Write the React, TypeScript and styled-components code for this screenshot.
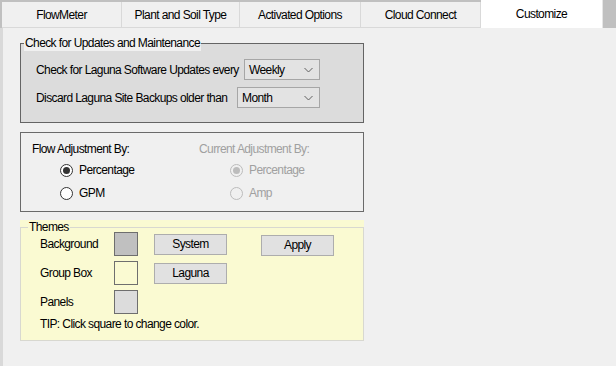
import { FC } from 'react'
import styled, { createGlobalStyle } from 'styled-components'

const GlobalStyle = createGlobalStyle`
  html, body {
    margin: 0;
    padding: 0;
    background: #f0f0f0;
  }
  body {
    font-family: "Liberation Sans", Arial, sans-serif;
    font-size: 12px;
    letter-spacing: -0.6px;
    color: #000;
  }
`

const tabs = [
  { label: 'FlowMeter', width: 120 },
  { label: 'Plant and Soil Type', width: 118 },
  { label: 'Activated Options', width: 121 },
  { label: 'Cloud Connect', width: 120 },
  { label: 'Customize', width: 122, active: true },
]

const Chevron: FC = () => (
  <svg width="9" height="6" viewBox="0 0 9 6">
    <polyline points="0.5,1 4.5,5 8.5,1" fill="none" stroke="#606060" strokeWidth="1" />
  </svg>
)

type ComboProps = { value: string, width: number }

const Combo: FC<ComboProps> = ({ value, width }) => (
  <ComboBox $width={width}>
    <span>{value}</span>
    <Chevron />
  </ComboBox>
)

type RadioProps = { label: string, checked?: boolean, disabled?: boolean }

const Radio: FC<RadioProps> = ({ label, checked, disabled }) => (
  <RadioRow $disabled={disabled}>
    <RadioCircle $disabled={disabled}>{checked && <RadioDot $disabled={disabled} />}</RadioCircle>
    {label}
  </RadioRow>
)

const App: FC = () => {
  return (
    <Page>
      <GlobalStyle />
      <TabStrip>
        {tabs.map((t) => (
          <Tab key={t.label} $width={t.width} $active={!!t.active}>
            {t.label}
          </Tab>
        ))}
      </TabStrip>
      <Pane>
        <UpdatesBox>
          <UpdatesLegend>Check for Updates and Maintenance</UpdatesLegend>
          <UpdateRows>
            <UpdateRow>
              <RowLabel $width={208}>Check for Laguna Software Updates every</RowLabel>
              <Combo value="Weekly" width={76} />
            </UpdateRow>
            <UpdateRow>
              <RowLabel $width={201}>Discard Laguna Site Backups older than</RowLabel>
              <Combo value="Month" width={83} />
            </UpdateRow>
          </UpdateRows>
        </UpdatesBox>

        <FlowPanel>
          <FlowColumn>
            <ColumnHeader>Flow Adjustment By:</ColumnHeader>
            <RadioList $indent={28}>
              <Radio label="Percentage" checked />
              <Radio label="GPM" />
            </RadioList>
          </FlowColumn>
          <FlowColumn>
            <ColumnHeader $disabled>Current Adjustment By:</ColumnHeader>
            <RadioList $indent={31}>
              <Radio label="Percentage" checked disabled />
              <Radio label="Amp" disabled />
            </RadioList>
          </FlowColumn>
        </FlowPanel>

        <ThemesPanel>
          <ThemesBox>
            <ThemesLegend>Themes</ThemesLegend>
            <ThemeGrid>
              <ThemeLabel>Background</ThemeLabel>
              <Swatch $color="#c0c0c0" />
              <Button>System</Button>
              <Button $shift={1}>Apply</Button>

              <ThemeLabel>Group Box</ThemeLabel>
              <Swatch $color="#fafad2" />
              <Button>Laguna</Button>
              <span />

              <ThemeLabel>Panels</ThemeLabel>
              <Swatch $color="#dcdcdc" />
              <span />
              <span />
            </ThemeGrid>
            <Tip>TIP: Click square to change color.</Tip>
          </ThemesBox>
        </ThemesPanel>
      </Pane>
    </Page>
  )
}

export default App

const Page = styled('div')`
  width: 616px;
  height: 366px;
  overflow: hidden;
  background: #f0f0f0;
`

const TabStrip = styled('div')`
  display: flex;
  align-items: flex-start;
  height: 28px;
  padding-left: 2px;
  background: #c0c0c0;
`

const Tab = styled('div')<{ $width: number, $active: boolean }>`
  box-sizing: border-box;
  width: ${({ $width }) => $width}px;
  height: ${({ $active }) => ($active ? 28 : 26)}px;
  margin-top: ${({ $active }) => ($active ? 0 : 2)}px;
  padding: ${({ $active }) => ($active ? '0 0 1px' : '1px 0 0')};
  display: flex;
  align-items: center;
  justify-content: center;
  background: ${({ $active }) => ($active ? '#ffffff' : '#f0f0f0')};
  border-right: 1px solid ${({ $active }) => ($active ? '#e6e6e6' : '#d9d9d9')};
  border-bottom: ${({ $active }) => ($active ? 'none' : '1px solid #d9d9d9')};
`

const Pane = styled('div')`
  height: 338px;
  box-sizing: border-box;
  border-left: 3px solid #d9d9d9;
  padding: 8px 0 0 17px;
  display: flex;
  flex-direction: column;
  align-items: flex-start;
`

const UpdatesBox = styled('fieldset')`
  box-sizing: border-box;
  width: 344px;
  margin: 0;
  padding: 0 0 14px 3px;
  min-width: 0;
  border: 1px solid #646464;
  background: #dcdcdc;
`

const UpdatesLegend = styled('legend')`
  padding: 0 1px;
  line-height: 15px;
  background: #f0f0f0;
`

const UpdateRows = styled('div')`
  display: flex;
  flex-direction: column;
  gap: 7px;
  padding: 8px 0 0 12px;
`

const UpdateRow = styled('div')`
  display: flex;
  align-items: center;
  height: 21px;
`

const RowLabel = styled('span')<{ $width: number }>`
  width: ${({ $width }) => $width}px;
  white-space: nowrap;
`

const ComboBox = styled('div')<{ $width: number }>`
  box-sizing: border-box;
  width: ${({ $width }) => $width}px;
  height: 21px;
  display: flex;
  align-items: center;
  justify-content: space-between;
  padding: 1px 6px 0 4px;
  border: 1px solid #a6a6a6;
  background: #e3e3e3;
`

const FlowPanel = styled('div')`
  box-sizing: border-box;
  width: 344px;
  height: 80px;
  margin-top: 9px;
  padding: 9px 0 0 11px;
  border: 1px solid #6a6a6a;
  display: grid;
  grid-template-columns: 167px 1fr;
`

const FlowColumn = styled('div')`
  display: flex;
  flex-direction: column;
`

const ColumnHeader = styled('div')<{ $disabled?: boolean }>`
  line-height: 15px;
  color: ${({ $disabled }) => ($disabled ? '#a0a0a0' : '#000')};
`

const RadioList = styled('div')<{ $indent: number }>`
  display: flex;
  flex-direction: column;
  gap: 1px;
  margin-top: 2px;
  padding-left: ${({ $indent }) => $indent}px;
`

const RadioRow = styled('div')<{ $disabled?: boolean }>`
  display: flex;
  align-items: center;
  gap: 6px;
  height: 22px;
  color: ${({ $disabled }) => ($disabled ? '#a0a0a0' : '#000')};
`

const RadioCircle = styled('span')<{ $disabled?: boolean }>`
  box-sizing: border-box;
  width: 13px;
  height: 13px;
  border-radius: 50%;
  border: 1px solid ${({ $disabled }) => ($disabled ? '#bcbcbc' : '#333333')};
  background: ${({ $disabled }) => ($disabled ? '#f0f0f0' : '#ffffff')};
  display: flex;
  align-items: center;
  justify-content: center;
`

const RadioDot = styled('span')<{ $disabled?: boolean }>`
  width: 7px;
  height: 7px;
  border-radius: 50%;
  background: ${({ $disabled }) => ($disabled ? '#bcbcbc' : '#333333')};
`

const ThemesPanel = styled('div')`
  box-sizing: border-box;
  width: 344px;
  margin-top: 8px;
  background: #fafad2;
`

const ThemesBox = styled('fieldset')`
  box-sizing: border-box;
  margin: 0;
  min-width: 0;
  padding: 0 0 8px 7px;
  border: 1px solid #d8d8d0;
`

const ThemesLegend = styled('legend')`
  padding: 0 1px;
  line-height: 15px;
`

const ThemeGrid = styled('div')`
  display: grid;
  grid-template-columns: 74px 40px 107px 73px;
  grid-auto-rows: 24px;
  row-gap: 5px;
  align-items: center;
  margin-top: -3px;
  padding-left: 12px;
`

const ThemeLabel = styled('span')`
  white-space: nowrap;
`

const Swatch = styled('div')<{ $color: string }>`
  box-sizing: border-box;
  width: 24px;
  height: 24px;
  border: 1px solid #6e6e6e;
  background: ${({ $color }) => $color};
`

const Button = styled('button')<{ $shift?: number }>`
  box-sizing: border-box;
  width: 73px;
  height: 21px;
  margin: ${({ $shift }) => ($shift ?? 0) * 2}px 0 0;
  padding: 0;
  border: 1px solid #adadad;
  background: #e1e1e1;
  font: inherit;
  letter-spacing: inherit;
  color: #000;
`

const Tip = styled('div')`
  margin-top: 3px;
  padding-left: 12px;
  line-height: 15px;
`
